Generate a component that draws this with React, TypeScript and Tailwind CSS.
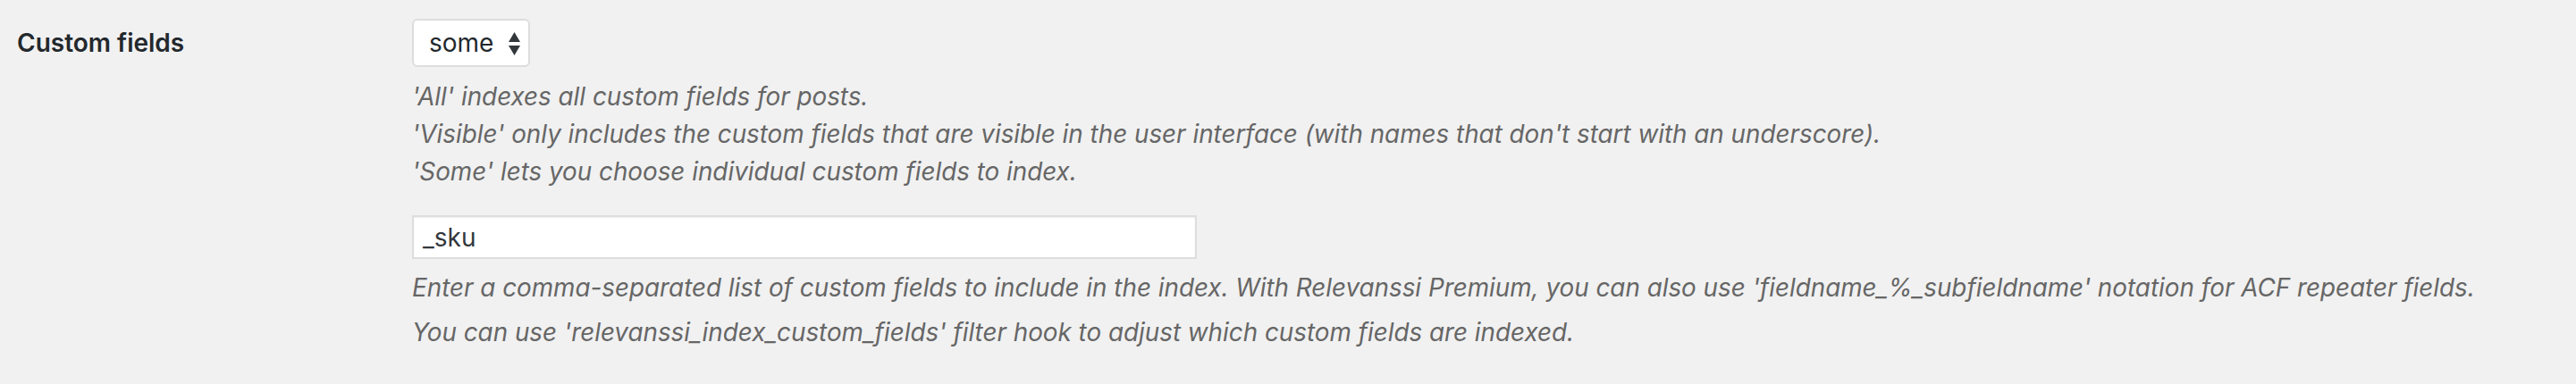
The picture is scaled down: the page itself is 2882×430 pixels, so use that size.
import React from "react";

export default function App() {
  return (
    <div className="w-[2882px] h-[430px] bg-[#f1f1f1] flex font-['Inter',sans-serif]">
      <div className="w-[461px] shrink-0 pl-[19px] pt-[27px] text-[28px] leading-[42px] font-semibold text-[#23282d]">
        Custom fields
      </div>
      <div className="flex flex-col pt-[21px]">
        <div className="h-[54px] w-[132px] rounded-[6px] border-2 border-[#dddddd] bg-white flex items-center pl-[17px] pr-[9px] justify-between text-[28px] text-[#23282d]">
          <span className="leading-[42px]">some</span>
          <svg width="13" height="27" viewBox="0 0 13 27" className="mt-[2px]">
            <polygon points="6.5,0 13,11 0,11" fill="#32373c" />
            <polygon points="0,15 13,15 6.5,26" fill="#32373c" />
          </svg>
        </div>
        <div className="mt-[12px] text-[27.8px] leading-[42px] italic text-[#666666]">
          <p>'All' indexes all custom fields for posts.</p>
          <p>'Visible' only includes the custom fields that are visible in the user interface (with names that don't start with an underscore).</p>
          <p>'Some' lets you choose individual custom fields to index.</p>
        </div>
        <div className="mt-[28px] h-[49px] w-[878px] border-2 border-[#dddddd] bg-white shadow-[inset_0_1px_2px_rgba(0,0,0,0.07)] flex items-center pl-[10px] text-[28px] text-[#32373c]">
          _sku
        </div>
        <div className="mt-[11px] text-[27.8px] leading-[42px] italic text-[#666666] flex flex-col gap-[8px]">
          <p>Enter a comma-separated list of custom fields to include in the index. With Relevanssi Premium, you can also use 'fieldname_%_subfieldname' notation for ACF repeater fields.</p>
          <p>You can use 'relevanssi_index_custom_fields' filter hook to adjust which custom fields are indexed.</p>
        </div>
      </div>
    </div>
  );
}
